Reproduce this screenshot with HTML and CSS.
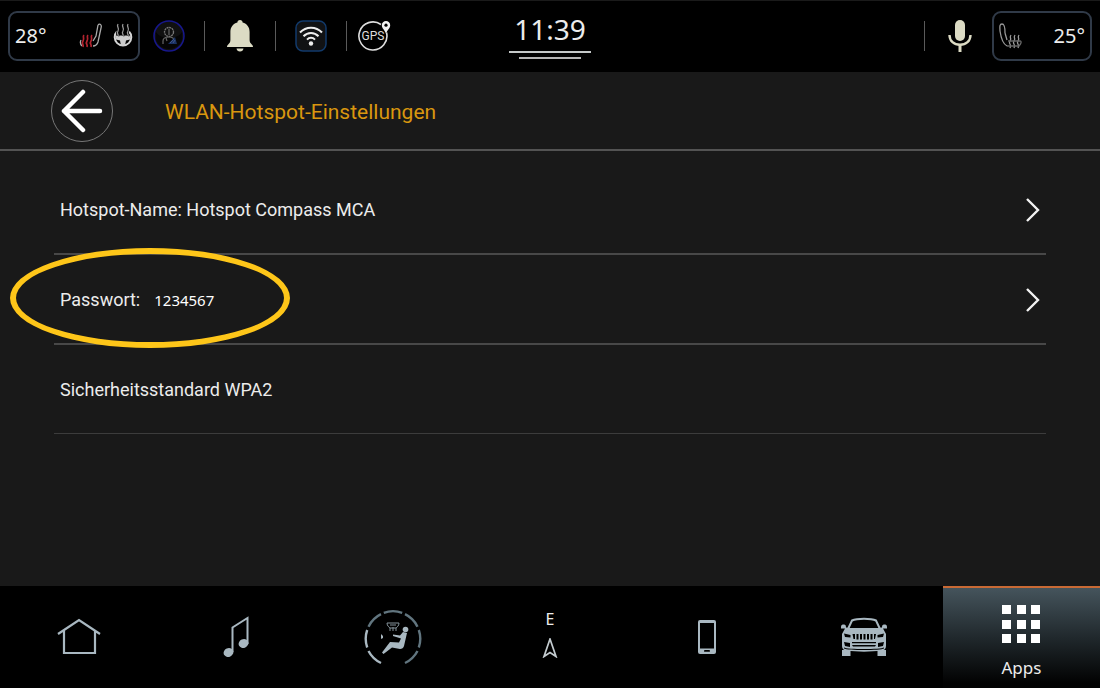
FILE: index.html
```html
<!DOCTYPE html>
<html lang="de">
<head>
    <meta charset="UTF-8">
    <meta name="viewport" content="width=device-width, initial-scale=1.0">
    <title>WLAN-Hotspot-Einstellungen</title>
    <link rel="stylesheet" href="styles.css">
</head>
<body>
    <header class="status-bar">
        <div class="status-left">
            <button class="climate climate-left" aria-label="Klima links">
                <span class="temp">28°</span>
                <svg class="seat-icon" width="24" height="26" viewBox="0 0 24 26" fill="none">
                    <path d="M19 2c2-2 4 0 3 3l-3 14c-1 3-3 4-5 4M19 2l-2 11-3 5M2 17c-1 2-1 4 1 6" stroke="#aaa" stroke-width="1.3"/>
                    <path d="M5 12c-2 2 1 3-1 6s1 3 0 6M9 12c-2 2 1 3-1 6s1 3 0 6M13 12c-2 2 1 3-1 6s1 3 0 6" stroke="#b3242f" stroke-width="1.7"/>
                </svg>
                <svg class="wheel-icon" width="20" height="26" viewBox="0 0 20 26" fill="none">
                    <path d="M4 8.500a8.300 8.300 0 1 0 12 0" stroke="#d5d5d5" stroke-width="2"/>
                    <path d="M2 12.500h16l-1 4-4 1-1 5H8l-1-5-4-1z" fill="#ccc"/>
                    <path d="M5 1c-2 3 2 4 0 7s1 3 0 5M10 1c-2 3 2 4 0 7s1 3 0 5M15 1c-2 3 2 4 0 7s1 3 0 5" stroke="#000" stroke-width="2.600"/>
                    <path d="M5 1c-2 3 2 4 0 7s1 3 0 5M10 1c-2 3 2 4 0 7s1 3 0 5M15 1c-2 3 2 4 0 7s1 3 0 5" stroke="#999" stroke-width="1.3"/>
                </svg>
            </button>
            <button class="icon-btn profile-btn" aria-label="Profil">
                <svg width="32" height="32" viewBox="0 0 32 32" fill="none">
                    <circle cx="16" cy="16" r="15" fill="#101010" stroke="#17178c" stroke-width="1.5"/>
                    <path d="M3 12c5 8 21 8 26 0v8c-5 12-21 12-26 0z" fill="#050505"/>
                    <circle cx="16" cy="12" r="4.500" stroke="#777" stroke-width="1.3" stroke-dasharray="2 .6"/>
                    <path d="M16 9v6M10 24v-3c0-3 3-4 6-4s5 1 6 4M13 18l1 3" stroke="#666" stroke-width="1.2"/>
                    <path d="M15 24l7-7 2 7z" fill="#1b3263"/>
                    <path d="M17 23l4-4M20 23l2-3" stroke="#3e5687"/>
                </svg>
            </button>
            <span class="divider"></span>
            <button class="icon-btn bell-btn" aria-label="Mitteilungen">
                <svg width="28" height="32" viewBox="0 0 28 32" fill="#dcdbc4">
                    <path d="M14 0c1.600 0 2.600 1 2.600 2.600 4.500 1.200 7 4.700 7 9.400v8c0 2 .7 3 2 4.300 1 1 1.400 1.500 1.400 2.700H1c0-1.200.4-1.700 1.400-2.700 1.300-1.300 2-2.300 2-4.300v-8c0-4.700 2.500-8.200 7-9.400C11.400 1 12.400 0 14 0z"/>
                    <path d="M10.500 28.500h7c-.3 2-1.500 3-3.500 3s-3.200-1-3.500-3z"/>
                </svg>
            </button>
            <span class="divider"></span>
            <button class="icon-btn wifi-btn" aria-label="WLAN">
                <svg width="32" height="32" viewBox="0 0 32 32" fill="none">
                    <rect x="1" y="1" width="30" height="30" rx="7" fill="#111214" stroke="#123a6b" stroke-width="1.5"/>
                    <path d="M5 12.500c6-6.500 16-6.500 22 0M8.500 16.300c4.200-4.500 10.800-4.500 15 0M12 19.600c2.300-2.400 5.700-2.400 8 0" stroke="#eee" stroke-width="2"/>
                    <circle cx="16" cy="23.500" r="2.200" fill="#eee"/>
                </svg>
            </button>
            <span class="divider"></span>
            <button class="icon-btn gps-btn" aria-label="GPS">
                <svg width="34" height="32" viewBox="0 0 34 32" fill="none">
                    <path d="M23 4.500a14 14 0 1 0 5.500 8" stroke="#ddd" stroke-width="1.600"/>
                    <text x="15" y="20" text-anchor="middle" class="gps-text">GPS</text>
                    <path d="M28 1a4.200 4.200 0 0 1 4.200 4.200c0 3-2.700 4.500-4.200 8.300-1.500-3.800-4.200-5.300-4.200-8.300A4.200 4.200 0 0 1 28 1z" fill="#f2f2f2"/>
                    <circle cx="28" cy="5.200" r="1.600" fill="#000"/>
                </svg>
            </button>
        </div>
        <div class="clock">
            <time>11:39</time>
        </div>
        <div class="status-right">
            <span class="divider"></span>
            <button class="icon-btn mic-btn" aria-label="Sprachbefehl">
                <svg width="24" height="34" viewBox="0 0 24 34" fill="none">
                    <rect x="7" y="1" width="10" height="21" rx="5" fill="#dcdbc4"/>
                    <path d="M1.500 16c0 6 4.500 9.800 10.500 9.800S22.500 22 22.500 16" stroke="#dcdbc4" stroke-width="2.400"/>
                    <path d="M12 26v7" stroke="#dcdbc4" stroke-width="3"/>
                </svg>
            </button>
            <button class="climate climate-right" aria-label="Klima rechts">
                <svg width="24" height="26" viewBox="0 0 24 26" fill="none" stroke="#999" stroke-width="1.300">
                    <path d="M6 10C6 6 6 1 3 1S1 5 1 8c1 7 3 13 7 15M6 10l2 7"/>
                    <path d="M12 12c-2 3 1 3-1 6s2 3 0 7M16 12c-2 3 1 3-1 6s2 3 0 7M20 12c-2 3 1 3-1 6s2 3 0 7"/>
                    <path d="M9 18h12c2 0 1 3-1 5H8" stroke="#666"/>
                </svg>
                <span class="temp">25°</span>
            </button>
        </div>
    </header>

    <main>
        <div class="title-bar">
            <button class="back-btn" aria-label="Zurück">
                <svg width="42" height="44" viewBox="0 0 42 44" fill="none" stroke="#fff" stroke-width="4.500" stroke-linecap="round" stroke-linejoin="round">
                    <path d="M22 3L3 22l19 19M3 22h36"/>
                </svg>
            </button>
            <h1>WLAN-Hotspot-Einstellungen</h1>
        </div>
        <ul class="settings">
            <li>
                <button class="row">
                    <span>Hotspot-Name: Hotspot Compass MCA</span>
                    <svg class="chevron" width="16" height="26" viewBox="0 0 16 26"><path d="M2 2l11 11L2 24"/></svg>
                </button>
            </li>
            <li class="highlighted">
                <button class="row">
                    <span>Passwort:</span>
                    <span class="password">1234567</span>
                    <svg class="chevron" width="16" height="26" viewBox="0 0 16 26"><path d="M2 2l11 11L2 24"/></svg>
                </button>
            </li>
            <li class="last">
                <div class="row">Sicherheitsstandard WPA2</div>
            </li>
        </ul>
    </main>

    <nav class="nav-bar">
        <button aria-label="Startseite">
            <svg width="44" height="38" viewBox="0 0 44 38" fill="none" stroke="#a9b8c1" stroke-width="2.200">
                <path d="M1 16L22 2l21 14M7 12v23h31V12"/>
            </svg>
        </button>
        <button aria-label="Medien">
            <svg width="26" height="42" viewBox="0 0 26 42" fill="none">
                <path d="M9.500 36V11.500L24.500 2v26" stroke="#a9b8c1" stroke-width="2"/>
                <ellipse cx="5.500" cy="36.500" rx="5" ry="4.300" fill="#a9b8c1" transform="rotate(-25 5.500 36.500)"/>
                <ellipse cx="20.500" cy="27.500" rx="5" ry="4.300" fill="#a9b8c1" transform="rotate(-25 20.500 27.500)"/>
            </svg>
        </button>
        <button aria-label="Klima">
            <svg width="58" height="56" viewBox="0 0 58 56" fill="none">
                <path d="M19.800 3.800a27 27 0 0 1 18.400 0M41 5.200a27 27 0 0 1 12.500 12.500M54.800 21a27 27 0 0 1 0 17.500M53.500 42a27 27 0 0 1-12.500 12M4.500 17.700A27 27 0 0 1 17 5.200" stroke="#61757f" stroke-width="2.400"/>
                <path d="M3.200 21a27 27 0 0 0 0 17.500M4.500 42A27 27 0 0 0 17 54" stroke="#a9b8c1" stroke-width="2.400"/>
                <circle cx="41.500" cy="20.500" r="2.800" fill="#a9b8c1"/>
                <path d="M39 23l4 1-3 13c-.5 2-2 3-4 3l-8-1.500L19.500 45 18 43.500l8-10.500 9 .5 2-4-8-2.500v-1.500l7 1z" fill="#a9b8c1"/>
                <path d="M17 25v5l2-1v-2z" fill="#a9b8c1"/>
                <path d="M23 14h12c0 3-2 4-3 5h-6c-1-1-3-2-3-5zM26 16h6M26 19v3M29 18v4M32 19v3" stroke="#85939b"/>
            </svg>
        </button>
        <button class="compass" aria-label="Navigation E">
            <span>E</span>
            <svg width="16" height="20" viewBox="0 0 16 20" fill="none" stroke="#c4ccd0" stroke-width="1.700">
                <path d="M8 1l6 17.500-6-4-6 4z"/>
            </svg>
        </button>
        <button aria-label="Telefon">
            <svg width="20" height="36" viewBox="0 0 20 36">
                <rect x="1" y="1" width="18" height="34" rx="2" fill="#a9b8c1"/>
                <rect x="3" y="4" width="14" height="25.500" fill="#000"/>
                <rect x="7" y="31" width="6" height="1.800" rx=".9" fill="#000"/>
            </svg>
        </button>
        <button aria-label="Fahrzeug">
            <svg width="48" height="40" viewBox="0 0 48 40">
                <path d="M8 12L12 3.500C17 1 31 1 36 3.500L40 12" fill="none" stroke="#a9b8c1" stroke-width="2"/>
                <path d="M1 10c0-2 1-2.500 3-2.500 1.500 0 2 1 2 3l4 .5h28l4-.5c0-2 .5-3 2-3 2 0 3 .5 3 2.500v1.500h-4l3 5.500v12c0 3-2 4.500-5 4.500-9 1.500-25 1.500-34 0-3 0-5-1.500-5-4.500V17l3-5.500H1z" fill="#a9b8c1"/>
                <path d="M2 33h8.500v6H2zM37.500 33H46v6h-8.500z" fill="#a9b8c1"/>
                <path d="M4 16.500l6.500 1.500v2.500L5 20zM44 16.500L37.500 18v2.500L43 20zM12.500 17H15v5h-1.500zM16.500 17h2v5.500h-2zM20 17h2v5.500h-2zM23.500 17h2v5.500h-2zM27 17h2v5.500h-2zM30.500 17h2v5.500h-2zM34 17h2l-1 5h-1zM4 25l6 1v4l-5-1zM44 25l-6 1v4l5-1zM12 25h24v1.300H12zM12 28h24l-1 1.500H13zM4 30.500c3 2 37 2 40 0v1c-3 2-37 2-40 0z" fill="#000"/>
            </svg>
        </button>
        <button class="apps active">
            <svg width="40" height="40" viewBox="0 0 40 40" fill="#fff">
                <path d="M1 1h9v9H1zM16 1h9v9h-9zM30 1h9v9h-9zM1 16h9v9H1zM16 16h9v9h-9zM30 16h9v9h-9zM1 30h9v9H1zM16 30h9v9h-9zM30 30h9v9h-9z"/>
            </svg>
            <span>Apps</span>
        </button>
    </nav>
</body>
</html>
```
FILE: styles.css
```css
*,
*::before,
*::after {
    box-sizing: border-box;
}

body {
    margin: 0;
    min-height: 100vh;
    display: flex;
    flex-direction: column;
    background: #191919;
    color: #ececec;
    font-family: Roboto, "Liberation Sans", sans-serif;
}

button {
    margin: 0;
    padding: 0;
    border: none;
    background: none;
    color: inherit;
    font: inherit;
    cursor: pointer;
}

svg {
    display: block;
    flex-shrink: 0;
}

/* status bar */
.status-bar {
    display: flex;
    align-items: center;
    height: 72px;
    padding: 0 8px 2px;
    background: #000;
    border-top: 1px solid #1a1a1a;
}

.status-left,
.status-right {
    flex: 1;
    display: flex;
    align-items: center;
}

.status-right {
    justify-content: flex-end;
}

.climate {
    display: flex;
    align-items: center;
    height: 50px;
    padding: 0 5px;
    border: 2px solid #303a48;
    border-radius: 9px;
}

.climate-left {
    width: 132px;
}

.climate-right {
    width: 100px;
    justify-content: space-between;
}

.temp {
    font-family: "Noto Sans", sans-serif;
    font-size: 20px;
    line-height: 28px;
}

.seat-icon {
    margin-left: auto;
}

.wheel-icon {
    margin-left: 10px;
}

.profile-btn {
    margin: 0 19px 0 13px;
}

.divider {
    width: 1px;
    height: 30px;
    background: #5a5a5a;
}

.bell-btn {
    margin: 0 21px;
}

.wifi-btn {
    margin: 0 19px;
}

.gps-btn {
    margin-left: 11px;
}

.gps-text {
    font-family: Roboto, sans-serif;
    font-size: 12px;
    fill: #ddd;
}

.mic-btn {
    margin: 0 20px 0 23px;
}

.clock {
    display: flex;
    flex-direction: column;
    align-items: center;
    font-family: "Noto Sans", sans-serif;
    font-size: 28px;
    line-height: 32px;
}

.clock time {
    width: 82px;
    padding-bottom: 6px;
    text-align: center;
    border-bottom: 2px solid #c4c8c8;
}

.clock::after {
    content: "";
    width: 62px;
    height: 2px;
    margin-top: 4px;
    background: #b5b5b5;
}

/* settings page */
main {
    flex: 1;
}

.title-bar {
    display: flex;
    align-items: center;
    gap: 52px;
    height: 79px;
    padding-left: 51px;
    border-bottom: 2px solid #535353;
}

.back-btn {
    display: flex;
    align-items: center;
    justify-content: center;
    width: 62px;
    height: 62px;
    border: 1px solid #777;
    border-radius: 50%;
}

h1 {
    margin: 0;
    padding-top: 2px;
    color: #d9970f;
    font-size: 21px;
    font-weight: 400;
    line-height: 24px;
}

.settings {
    margin: 0;
    padding: 14px 54px 0;
    list-style: none;
}

.settings li {
    position: relative;
    border-bottom: 2px solid #484848;
}

.settings .last {
    border-bottom: 1px solid #3c3c3c;
}

.row {
    display: flex;
    align-items: center;
    width: 100%;
    height: 88px;
    padding: 2px 5px 0 6px;
    font-size: 18px;
    line-height: 24px;
    text-align: left;
}

.password {
    margin-left: 14px;
    color: #fff;
    font-family: "Noto Sans", sans-serif;
    font-size: 15px;
}

.chevron {
    margin-left: auto;
    fill: none;
    stroke: #f2f2f2;
    stroke-width: 2.4;
}

/* marker drawn over the password row */
.highlighted::after {
    content: "";
    position: absolute;
    top: -7px;
    left: -44px;
    width: 280px;
    height: 100px;
    border: 6px solid #fec619;
    border-radius: 50%;
    pointer-events: none;
    z-index: 1;
}

/* bottom navigation */
.nav-bar {
    display: grid;
    grid-template-columns: repeat(7, 1fr);
    height: 102px;
    background: #000;
}

.nav-bar button {
    display: flex;
    flex-direction: column;
    align-items: center;
    justify-content: center;
}

.nav-bar .compass {
    gap: 8px;
    padding-bottom: 8px;
    font-family: "Noto Sans", sans-serif;
    font-size: 16px;
    line-height: 22px;
}

.nav-bar .active {
    gap: 12px;
    padding-top: 8px;
    border-top: 2px solid #c96a35;
    background: linear-gradient(#45545c, #20282c 50%, #020202 95%);
}

.apps span {
    font-family: "Noto Sans", sans-serif;
    font-size: 17px;
    line-height: 24px;
}
```
